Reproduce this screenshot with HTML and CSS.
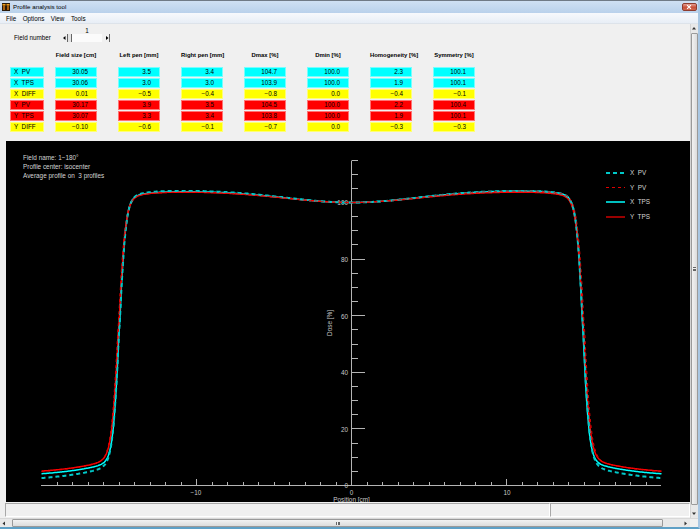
FILE: index.html
```html
<!DOCTYPE html>
<html>
<head>
<meta charset="utf-8">
<title>Profile analysis tool</title>
<link rel="stylesheet" href="styles.css">
</head>
<body>
<div class="window">
  <div class="titlebar">
    <svg class="app-icon" width="8" height="8" viewBox="0 0 8 8"><rect width="8" height="8" fill="#2a1a0a"/><rect x="0.5" y="1" width="3" height="1.5" fill="#f0a020"/><rect x="4.5" y="1" width="3" height="1.5" fill="#f0a020"/><rect x="1.3" y="2.5" width="1.4" height="4.5" fill="#e08010"/><rect x="5.3" y="2.5" width="1.4" height="4.5" fill="#e08010"/></svg>
    <span class="title">Profile analysis tool</span>
    <span class="close"><svg width="15" height="8" viewBox="0 0 15 8"><path d="M5.5 2 L9.5 6 M9.5 2 L5.5 6" stroke="#fff" stroke-width="1.3"/></svg></span>
  </div>
  <div class="menubar">
    <span>File</span><span>Options</span><span>View</span><span>Tools</span>
  </div>
  <div class="client">
    <div class="main">
      <div class="field">
        <div class="field-label">Field number</div>
        <div class="slider-wrap">
          <div class="slider-value">1</div>
          <div class="slider">
            <span class="sl-arrow"><svg width="5" height="8" viewBox="0 0 5 8"><path d="M1 4 L3.5 2 L3.5 6 Z" fill="#000"/></svg></span>
            <span class="sl-thumb"></span>
            <span class="sl-track"></span>
            <span class="sl-arrow right"><svg width="7" height="8" viewBox="0 0 7 8"><path d="M4 2 L6.5 4 L4 6 Z" fill="#000"/></svg></span>
          </div>
        </div>
      </div>

      <div class="thead">
        <span></span>
        <span class="th">Field size [cm]</span>
        <span class="th">Left pen [mm]</span>
        <span class="th">Right pen [mm]</span>
        <span class="th">Dmax [%]</span>
        <span class="th">Dmin [%]</span>
        <span class="th">Homogeneity [%]</span>
        <span class="th">Symmetry [%]</span>
      </div>
      <div class="tbody">
        <span class="lab c">X  PV</span><span class="cell c">30.05</span><span class="cell c">3.5</span><span class="cell c">3.4</span><span class="cell c">104.7</span><span class="cell c">100.0</span><span class="cell c">2.3</span><span class="cell c">100.1</span>
        <span class="lab c">X  TPS</span><span class="cell c">30.06</span><span class="cell c">3.0</span><span class="cell c">3.0</span><span class="cell c">103.9</span><span class="cell c">100.0</span><span class="cell c">1.9</span><span class="cell c">100.1</span>
        <span class="lab y">X  DIFF</span><span class="cell y">0.01</span><span class="cell y">−0.5</span><span class="cell y">−0.4</span><span class="cell y">−0.8</span><span class="cell y">0.0</span><span class="cell y">−0.4</span><span class="cell y">−0.1</span>
        <span class="lab r">Y  PV</span><span class="cell r">30.17</span><span class="cell r">3.9</span><span class="cell r">3.5</span><span class="cell r">104.5</span><span class="cell r">100.0</span><span class="cell r">2.2</span><span class="cell r">100.4</span>
        <span class="lab r">Y  TPS</span><span class="cell r">30.07</span><span class="cell r">3.3</span><span class="cell r">3.4</span><span class="cell r">103.8</span><span class="cell r">100.0</span><span class="cell r">1.9</span><span class="cell r">100.1</span>
        <span class="lab y">Y  DIFF</span><span class="cell y">−0.10</span><span class="cell y">−0.6</span><span class="cell y">−0.1</span><span class="cell y">−0.7</span><span class="cell y">0.0</span><span class="cell y">−0.3</span><span class="cell y">−0.3</span>
      </div>

      <div class="plot">
        <svg id="chart" width="684" height="361" viewBox="0 0 684 361">
          <g class="ptext">
            <text x="17" y="18.5">Field name: 1−180°</text>
            <text x="17" y="27.5">Profile center: isocenter</text>
            <text x="17" y="36.5">Average profile on  3 profiles</text>
          </g>
          <g id="axes" class="axis">
            <line x1="35" y1="344.5" x2="655" y2="344.5"/>
            <line x1="345.5" y1="19.5" x2="345.5" y2="345"/>
          </g>
          <g class="ticklab">
            <text x="342" y="347">0</text>
            <text x="342" y="290.7">20</text>
            <text x="342" y="234.1">40</text>
            <text x="342" y="177.5">60</text>
            <text x="342" y="120.9">80</text>
            <text x="342" y="64.3">100</text>
          </g>
          <g class="xlab">
            <text x="190" y="354">−10</text>
            <text x="345.5" y="354">0</text>
            <text x="501" y="354">10</text>
            <text x="345.5" y="360.5">Position [cm]</text>
            <text x="324" y="184" transform="rotate(-90 324 182)">Dose [%]</text>
          </g>
          <g id="curves"></g>
          <g class="legend">
            <line x1="600" y1="32" x2="619" y2="32" stroke="#00c8c8" stroke-width="2" stroke-dasharray="4 3"/>
            <text x="624" y="34.3">X  PV</text>
            <line x1="600" y1="46.5" x2="619" y2="46.5" stroke="#e00000" stroke-width="1" stroke-dasharray="3 3"/>
            <text x="624" y="48.8">Y  PV</text>
            <line x1="600" y1="61" x2="619" y2="61" stroke="#00ffff" stroke-width="1.5"/>
            <text x="624" y="63.3">X  TPS</text>
            <line x1="600" y1="76" x2="619" y2="76" stroke="#ff0000" stroke-width="1.2"/>
            <text x="624" y="78.3">Y  TPS</text>
          </g>
        </svg>
      </div>

      <div class="status">
        <div class="status-cell first"></div>
        <div class="status-cell second"></div>
      </div>
    </div>
    <div class="vscroll">
      <span class="vs-arrow"><svg width="8" height="9" viewBox="0 0 8 9"><path d="M2 5.5 L4 3 L6 5.5 Z" fill="#333"/></svg></span>
      <span class="vs-thumb"><span class="grip-v"></span></span>
      <span class="vs-arrow"><svg width="8" height="9" viewBox="0 0 8 9"><path d="M2 3.5 L4 6 L6 3.5 Z" fill="#333"/></svg></span>
    </div>
  </div>
  <div class="hscroll">
    <span class="hs-arrow"><svg width="10" height="9" viewBox="0 0 10 9"><path d="M5 2.5 L2.5 4.5 L5 6.5 Z" fill="#333"/></svg></span>
    <span class="hs-thumb"><span class="grip-h"></span></span>
    <span class="hs-track"></span>
    <span class="hs-arrow"><svg width="10" height="9" viewBox="0 0 10 9"><path d="M4.5 2.5 L7 4.5 L4.5 6.5 Z" fill="#333"/></svg></span>
    <span class="hs-corner"></span>
  </div>
</div>
<script src="script.js"></script>
</body>
</html>
```

FILE: styles.css
```css
* { box-sizing: border-box; margin: 0; padding: 0; }
html, body { width: 700px; height: 529px; overflow: hidden; }
body {
  background: #f0f0f0;
  font-family: "Liberation Sans", Arial, sans-serif;
  color: #000;
}
.window {
  width: 700px;
  height: 529px;
  display: flex;
  flex-direction: column;
  background: #f0f0f0;
  border-right: 2px solid #a9c7e3;
  border-bottom: 2px solid #5fa0c6;
}
.titlebar {
  height: 13px;
  flex: none;
  display: flex;
  align-items: center;
  padding-left: 2px;
  border-top: 1px solid #707a86;
  background: linear-gradient(#cfe0f3, #b9d1eb);
}
.app-icon { flex: none; }
.title {
  margin-left: 3px;
  font-size: 6.2px;
  line-height: 8px;
}
.close {
  margin-left: auto;
  margin-right: 1px;
  width: 15px;
  height: 8px;
  border: 1px solid #8e3c2f;
  border-radius: 2px;
  background: linear-gradient(#e6a194, #c8503a 55%, #d0684f);
  display: flex;
}
.close svg { margin: -1px 0 0 -1px; }
.menubar {
  height: 11px;
  flex: none;
  display: flex;
  align-items: center;
  gap: 6.5px;
  padding-left: 6px;
  font-size: 6.3px;
  background: linear-gradient(#f7f9fc, #e8eef6);
  border-bottom: 1px solid #dde3ea;
}
.client {
  flex: 1;
  display: flex;
  min-height: 0;
}
.main {
  width: 690px;
  display: flex;
  flex-direction: column;
}
.field {
  height: 18px;
  flex: none;
  display: flex;
  align-items: flex-end;
  padding: 3px 0 0 14px;
}
.field-label {
  width: 48px;
  font-size: 6.3px;
  line-height: 8px;
}
.slider-wrap {
  width: 48px;
  display: flex;
  flex-direction: column;
  align-items: center;
}
.slider-value {
  font-size: 6.3px;
  line-height: 7px;
  padding-left: 2px;
}
.slider {
  display: flex;
  width: 48px;
  height: 8px;
}
.sl-arrow { width: 5px; height: 8px; display: flex; }
.sl-arrow.right { width: 8px; border-right: 1px solid #666; }
.sl-thumb {
  width: 5px;
  height: 8px;
  border-left: 1px solid #666;
  border-right: 1px solid #666;
  background: #e4e4e4;
}
.sl-track { width: 30px; height: 8px; background: #fbfbfb; }

.thead {
  margin-top: 9px;
  height: 9px;
  flex: none;
  display: grid;
  grid-template-columns: 45px repeat(7, 63px);
  padding-left: 10px;
}
.th {
  width: 42px;
  text-align: center;
  white-space: nowrap;
  font-size: 5.9px;
  font-weight: bold;
  line-height: 9px;
}
.tbody {
  margin-top: 7px;
  flex: none;
  display: grid;
  grid-template-columns: 45px repeat(7, 63px);
  grid-auto-rows: 10px;
  row-gap: 1px;
  padding-left: 10px;
}
.lab, .cell {
  height: 10px;
  font-size: 6.3px;
  line-height: 10px;
  white-space: pre;
  box-shadow: inset 0 0 0 1px rgba(255, 255, 255, 0.45);
}
.lab { width: 34px; padding-left: 4px; }
.cell { width: 42px; text-align: right; padding-right: 9px; }
.c { background: #00ffff; }
.y { background: #ffff00; }
.r { background: #ff0000; }

.plot {
  margin: 9px 0 0 6px;
  width: 684px;
  height: 361px;
  flex: none;
  background: #000;
}
.plot svg { display: block; }
.ptext text, .legend text {
  font-family: "Liberation Sans", Arial, sans-serif;
  font-size: 6.4px;
  fill: #d4d4d4;
  white-space: pre;
}
.axis line { stroke: #b4b4b4; stroke-width: 1; }
.ticklab text {
  font-size: 6.4px;
  fill: #c8c8c8;
  text-anchor: end;
}
.xlab text {
  font-size: 6.4px;
  fill: #c8c8c8;
  text-anchor: middle;
}

.status {
  margin: 1px 0 0 5px;
  height: 14px;
  flex: none;
  display: flex;
}
.status-cell {
  height: 14px;
  border-top: 1px solid #a8a8a8;
  border-left: 1px solid #a8a8a8;
  border-bottom: 1px solid #fff;
  border-right: 1px solid #fff;
  background: #f0f0f0;
}
.status-cell.first { width: 545px; }
.status-cell.second { flex: 1; }

.vscroll {
  width: 8px;
  flex: none;
  display: flex;
  flex-direction: column;
  background: #e8e8e8;
  border-left: 1px solid #d4d4d4;
}
.vs-arrow { height: 9px; flex: none; display: flex; }
.vs-arrow svg { margin-left: -1px; }
.vs-thumb {
  flex: 1;
  margin: 0 0 4px 0;
  border: 1px solid #9a9a9a;
  border-radius: 1px;
  background: linear-gradient(90deg, #f2f2f2, #dcdcdc);
  display: flex;
  align-items: center;
  justify-content: center;
}
.grip-v {
  width: 3px;
  height: 4px;
  border-top: 1px solid #666;
  border-bottom: 1px solid #666;
  background: linear-gradient(#f0f0f0 1px, #666 1px, #666 2px, #f0f0f0 2px);
}
.hscroll {
  height: 9px;
  flex: none;
  display: flex;
  background: #e8e8e8;
  border-top: 1px solid #d8d8d8;
}
.hs-arrow { width: 10px; height: 8px; flex: none; display: flex; }
.hs-thumb {
  margin-left: 2px;
  width: 651px;
  height: 8px;
  border: 1px solid #9a9a9a;
  border-radius: 1px;
  background: linear-gradient(#f2f2f2, #dcdcdc);
  display: flex;
  align-items: center;
  justify-content: center;
}
.grip-h {
  width: 4px;
  height: 3px;
  border-left: 1px solid #666;
  border-right: 1px solid #666;
  background: linear-gradient(90deg, #f0f0f0 1px, #666 1px, #666 2px, #f0f0f0 2px);
}
.hs-track { flex: 1; }
.hs-corner { width: 8px; background: #f0f0f0; }
```

FILE: script.js
```js
(function () {
  var NS = 'http://www.w3.org/2000/svg';
  var X0 = 345.5, SX = 15.5, Y0 = 344.5, SY = 2.83;
  function px(x) { return X0 + x * SX; }
  function py(d) { return Y0 - d * SY; }
  function add(tag, attrs, parent) {
    var el = document.createElementNS(NS, tag);
    for (var k in attrs) el.setAttribute(k, attrs[k]);
    parent.appendChild(el);
    return el;
  }
  var axes = document.getElementById('axes');
  for (var i = -19; i <= 19; i++) {
    if (i === 0) continue;
    var x = Math.round(px(i) - 0.5) + 0.5;
    var len = (i % 10 === 0) ? 6 : 3;
    add('line', { x1: x, y1: 344, x2: x, y2: 344 - len }, axes);
  }
  for (var v = 5; v <= 115; v += 5) {
    var y = Math.round(py(v) - 0.5) + 0.5;
    var l = (v % 20 === 0) ? 13 : 6;
    add('line', { x1: 346, y1: y, x2: 346 + l, y2: y }, axes);
  }

  function dose(x, p) {
    var a = Math.abs(x);
    var e = x < 0 ? p.edgeL : p.edgeR;
    var s = 1 / (1 + Math.exp((a - e) / p.pen));
    var plateau = 100 + p.horn * (1 - Math.exp(-(x / 6) * (x / 6))) + p.tilt * x;
    if (a < e) plateau *= (1 - 0.035 * Math.exp(-(e - a) / 1.2));
    var t = p.tail + p.amp * Math.exp(-(a - e) / 3);
    if (t > 40) t = 40;
    return plateau * s + t * (1 - s);
  }
  function path(p) {
    var d = '';
    for (var k = 0; k <= 800; k++) {
      var x = -20 + k * 0.05;
      var X = px(x).toFixed(1), Y = py(dose(x, p)).toFixed(1);
      d += (k ? 'L' : 'M') + X + ' ' + Y;
    }
    return d;
  }
  var curves = document.getElementById('curves');
  var defs = [
    { p: { edgeL: 14.98, edgeR: 14.92, pen: 0.2, horn: 4.2, tilt: 0.01, tail: 3.0, amp: 6.2 },
      st: { stroke: '#00ffff', 'stroke-width': 1.5, fill: 'none' } },
    { p: { edgeL: 15.02, edgeR: 14.95, pen: 0.22, horn: 3.9, tilt: 0.0, tail: 3.9, amp: 6.3 },
      st: { stroke: '#ff0000', 'stroke-width': 1.4, fill: 'none' } },
    { p: { edgeL: 14.98, edgeR: 14.94, pen: 0.21, horn: 4.4, tilt: 0.0, tail: 1.4, amp: 6.6 },
      st: { stroke: '#00c8c8', 'stroke-width': 2, fill: 'none', 'stroke-dasharray': '4 3' } },
    { p: { edgeL: 15.06, edgeR: 15.02, pen: 0.22, horn: 4.1, tilt: 0.02, tail: 3.6, amp: 6.6 },
      st: { stroke: '#e00000', 'stroke-width': 1, fill: 'none', 'stroke-dasharray': '3 3' } }
  ];
  defs.forEach(function (c) {
    var attrs = c.st;
    attrs.d = path(c.p);
    attrs['stroke-linejoin'] = 'round';
    add('path', attrs, curves);
  });
})();
```
